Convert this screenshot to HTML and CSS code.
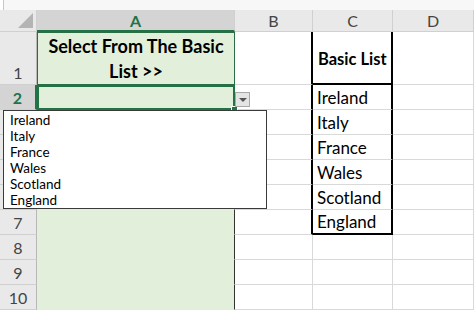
FILE: index.html
```html
<!DOCTYPE html>
<html lang="en">
<head>
    <meta charset="UTF-8">
    <title>Basic List dropdown</title>
    <link rel="stylesheet" href="styles.css">
</head>
<body>
    <div class="strip"></div>
    <div class="sheet">
        <!-- column headers -->
        <div class="hd corner"><span class="tri"></span></div>
        <div class="hd col sel">A</div>
        <div class="hd col">B</div>
        <div class="hd col">C</div>
        <div class="hd col">D</div>

        <!-- row 1 -->
        <div class="hd row">1</div>
        <div class="cell a a1">Select From The Basic List &gt;&gt;</div>
        <div class="cell b edge"></div>
        <div class="cell c c1">Basic List</div>
        <div class="cell"></div>

        <!-- row 2 -->
        <div class="hd row sel">2</div>
        <div class="cell a a2"></div>
        <div class="cell b edge"></div>
        <div class="cell c">Ireland</div>
        <div class="cell"></div>

        <div class="hd row">3</div>
        <div class="cell a"></div>
        <div class="cell b edge"></div>
        <div class="cell c">Italy</div>
        <div class="cell"></div>

        <div class="hd row">4</div>
        <div class="cell a"></div>
        <div class="cell b edge"></div>
        <div class="cell c">France</div>
        <div class="cell"></div>

        <div class="hd row">5</div>
        <div class="cell a"></div>
        <div class="cell b edge"></div>
        <div class="cell c">Wales</div>
        <div class="cell"></div>

        <div class="hd row">6</div>
        <div class="cell a"></div>
        <div class="cell b edge"></div>
        <div class="cell c">Scotland</div>
        <div class="cell"></div>

        <div class="hd row">7</div>
        <div class="cell a"></div>
        <div class="cell b edge"></div>
        <div class="cell c c-last">England</div>
        <div class="cell"></div>

        <div class="hd row">8</div>
        <div class="cell a"></div>
        <div class="cell b"></div>
        <div class="cell"></div>
        <div class="cell"></div>

        <div class="hd row">9</div>
        <div class="cell a"></div>
        <div class="cell b"></div>
        <div class="cell"></div>
        <div class="cell"></div>

        <div class="hd row">10</div>
        <div class="cell a"></div>
        <div class="cell b"></div>
        <div class="cell"></div>
        <div class="cell"></div>

        <!-- validation dropdown over the sheet -->
        <span class="handle"></span>
        <div class="drop-btn"><span class="arrow"></span></div>
        <ul class="drop-list">
            <li>Ireland</li>
            <li>Italy</li>
            <li>France</li>
            <li>Wales</li>
            <li>Scotland</li>
            <li>England</li>
        </ul>
    </div>
</body>
</html>
```

FILE: styles.css
```css
body { margin: 0; background: #fff; font-family: "Lato", "Open Sans", sans-serif; overflow: hidden; }
.strip { height: 10px; background: #f7f7f7; border-left: 1px solid #c8c8c8; margin-left: 3px; }
.sheet { position: relative; display: grid; grid-template-columns: 37px 198px 78px 80px 81px; grid-template-rows: 22px 53px repeat(9, 25px); }

.hd { box-sizing: border-box; background: #e9e9e9; color: #444; border-right: 1px solid #d0d0d0; border-bottom: 1px solid #d0d0d0; display: flex; justify-content: center; }
.hd.col { align-items: center; font-size: 16px; }
.hd.col.sel { background: #d4d4d4; color: #217346; font-weight: bold; border-bottom: 2px solid #217346; }
.hd.row { align-items: flex-end; font-size: 16px; padding-bottom: 2px; border-right: 1px solid #b8b8b8; }
.hd.row.sel { background: #d4d4d4; color: #217346; font-weight: bold; border-right: 2px solid #217346; }
.corner { position: relative; }
.tri { position: absolute; right: 3px; bottom: 3px; width: 0; height: 0; border-left: 15px solid transparent; border-bottom: 15px solid #b4b4b4; }

.cell { box-sizing: border-box; border-right: 1px solid #d9d9d9; border-bottom: 1px solid #d9d9d9; font-size: 17px; color: #000; display: flex; align-items: flex-end; padding: 0 4px 1px; }
.cell.a { background: #e2efda; border-bottom-color: #e2efda; border-right: 1px solid #333; }
.cell.a1 { border: 1px solid #2b6e44; font-weight: bold; font-size: 18px; line-height: 25px; text-align: center; justify-content: center; align-items: center; padding: 0 4px; }
.cell.a2 { border: 2px solid #217346; }
.cell.edge { border-right: 2px solid #000; }
.cell.c { border-right: 2px solid #000; }
.cell.c1 { border-bottom: 2px solid #000; font-weight: bold; font-size: 16.5px; align-items: center; padding: 3px 2px 0 5px; }
.cell.c-last { border-bottom: 2px solid #000; }

.handle { position: absolute; left: 231px; top: 96px; width: 5px; height: 5px; background: #217346; border: 1px solid #fff; }
.drop-btn { position: absolute; left: 235px; top: 82px; width: 15px; height: 15px; box-sizing: border-box; background: #e4e4e4; border: 1px solid #a8a8a8; display: flex; align-items: center; justify-content: center; }
.arrow { width: 0; height: 0; border-left: 4px solid transparent; border-right: 4px solid transparent; border-top: 4px solid #555; }
.drop-list { position: absolute; left: 3px; top: 100px; width: 264px; height: 99px; box-sizing: border-box; margin: 0; padding: 1px 6px; list-style: none; background: #fff; border: 1px solid #3a3a3a; font-size: 13.5px; line-height: 16px; color: #000; }
```
